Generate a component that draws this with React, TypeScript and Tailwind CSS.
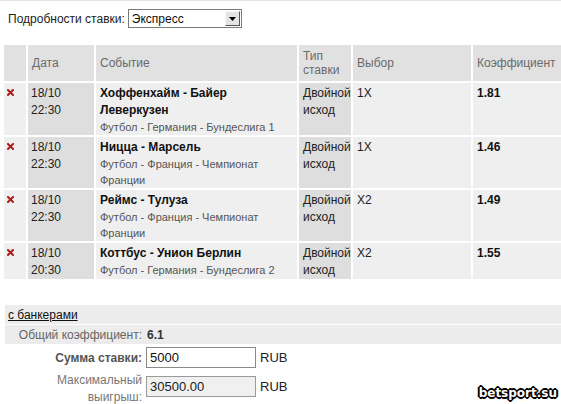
import React from "react";

type Row = { date: string; time: string; title: string; sub: string; pick: string; odd: string };

const rows: Row[] = [
  { date: "18/10", time: "22:30", title: "Хоффенхайм - Байер Леверкузен", sub: "Футбол - Германия - Бундеслига 1", pick: "1X", odd: "1.81" },
  { date: "18/10", time: "22:30", title: "Ницца - Марсель", sub: "Футбол - Франция - Чемпионат Франции", pick: "1X", odd: "1.46" },
  { date: "18/10", time: "22:30", title: "Реймс - Тулуза", sub: "Футбол - Франция - Чемпионат Франции", pick: "X2", odd: "1.49" },
  { date: "18/10", time: "20:30", title: "Коттбус - Унион Берлин", sub: "Футбол - Германия - Бундеслига 2", pick: "X2", odd: "1.55" },
];

function Cross() {
  return (
    <svg width="7" height="7" viewBox="0 0 7 7" className="block">
      <path d="M1 1 L6 6 M6 1 L1 6" stroke="#b01c1c" strokeWidth="2" strokeLinecap="square" />
    </svg>
  );
}

export default function App() {
  return (
    <div className="w-[561px] h-[404px] bg-white overflow-hidden relative font-['Liberation_Sans',Arial,sans-serif] text-[12px] text-[#1a1a1a] border-t border-[#e2e2e2]">
      {/* top selector */}
      <div className="flex items-center pl-[8px] pt-[8px] h-[27px]">
        <span className="text-[#222] leading-[18px]">Подробности ставки:</span>
        <div className="ml-[3px] w-[114px] h-[19px] border border-[#7b7b7b] bg-white flex items-center justify-between pl-[3px] pr-[1px]">
          <span className="text-[12px] text-[#111] leading-[16px]">Экспресс</span>
          <div className="w-[15px] h-[15px] bg-[#e4e4e4] border border-t-[#f8f8f8] border-l-[#f8f8f8] border-r-[#555] border-b-[#555] flex items-center justify-center">
            <svg width="7" height="4" viewBox="0 0 7 4" className="block">
              <path d="M0 0 H7 L3.5 4 Z" fill="#000" />
            </svg>
          </div>
        </div>
      </div>

      {/* table */}
      <div className="ml-[4px] mt-[17px] grid grid-cols-[22px_66px_201px_52px_118px_96px] gap-[2px] bg-white">
        <div className="bg-[#e1e1e1] h-[36px]" />
        <div className="bg-[#e1e1e1] h-[36px] flex items-center px-[4px] text-[#6a6a6a]">Дата</div>
        <div className="bg-[#e1e1e1] h-[36px] flex items-center px-[4px] text-[#6a6a6a]">Событие</div>
        <div className="bg-[#e1e1e1] h-[36px] flex items-center px-[4px] text-[#6a6a6a] leading-[14px]">Тип ставки</div>
        <div className="bg-[#e1e1e1] h-[36px] flex items-center px-[4px] text-[#6a6a6a]">Выбор</div>
        <div className="bg-[#e1e1e1] h-[36px] flex items-center px-[4px] text-[#6a6a6a]">Коэффициент</div>

        {rows.map((r, i) => (
          <React.Fragment key={i}>
            <div className="bg-[#efefef] pl-[3px] pt-[6px]">
              <Cross />
            </div>
            <div className="bg-[#dedede] px-[3px] pt-[2px] leading-[17px] text-[#222]">
              <div>{r.date}</div>
              <div>{r.time}</div>
            </div>
            <div className="bg-[#efefef] pl-[4px] pr-[16px] pt-[2px]">
              <div className="font-bold leading-[17px] text-[#111]">{r.title}</div>
              <div className="text-[11px] leading-[16px] text-[#555]">{r.sub}</div>
            </div>
            <div className="bg-[#dedede] px-[4px] pt-[2px] leading-[17px] text-[#222]">Двойной исход</div>
            <div className="bg-[#efefef] px-[4px] pt-[2px] leading-[17px] text-[#222]">{r.pick}</div>
            <div className="bg-[#efefef] px-[4px] pt-[2px] leading-[17px] font-bold text-[#111]">{r.odd}</div>
          </React.Fragment>
        ))}
      </div>

      {/* bottom */}
      <div className="ml-[5px] mt-[26px] w-[556px]">
        <div className="bg-[#ececec] h-[19px] flex items-center pl-[3px]">
          <span className="underline text-[#111] leading-[16px]">с банкерами</span>
        </div>
        <div className="bg-[#ececec] h-[19px] mt-[1px] flex items-center">
          <span className="w-[137px] text-right text-[#666]">Общий коэффициент:</span>
          <span className="ml-[5px] font-bold text-[#333]">6.1</span>
        </div>
      </div>

      <div className="grid grid-cols-[142px_110px_auto] gap-x-[4px] mt-[3px]">
        <span className="self-center text-right font-bold text-[#555]">Сумма ставки:</span>
        <div className="h-[21px] border border-[#8a8a8a] bg-white flex items-center px-[3px] text-[13px] text-[#111]">5000</div>
        <span className="self-center text-[13px] text-[#222]">RUB</span>

        <span className="self-start text-right text-[#777] leading-[17px] mt-[4px]">Максимальный<br />выигрыш:</span>
        <div className="self-start h-[21px] border border-[#9a9a9a] bg-[#f0f0f0] flex items-center px-[3px] text-[13px] text-[#222] mt-[8px]">30500.00</div>
        <span className="self-start text-[13px] text-[#222] mt-[8px] leading-[21px]">RUB</span>
      </div>

      <div className="absolute right-[4px] bottom-[4px] font-['DejaVu_Sans',sans-serif] font-bold text-[12px] text-white leading-[14px] [text-shadow:1px_0_0_#000,-1px_0_0_#000,0_1px_0_#000,0_-1px_0_#000,1px_1px_0_#000,-1px_-1px_0_#000,1px_-1px_0_#000,-1px_1px_0_#000,2px_0_0_#000,-2px_0_0_#000,0_2px_0_#000,0_-2px_0_#000]">
        betsport.su
      </div>
    </div>
  );
}
